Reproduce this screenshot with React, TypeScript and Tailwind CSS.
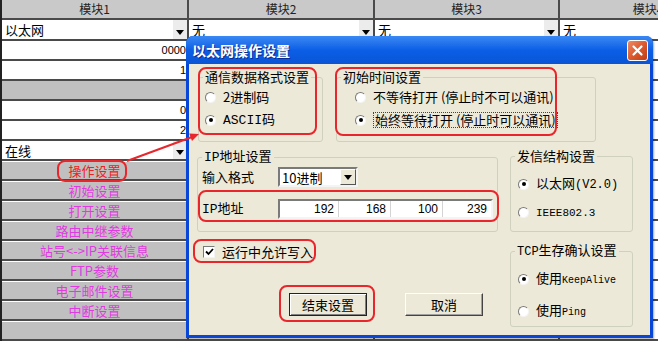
import type { ReactNode } from "react";

const mono = "font-['Liberation_Mono',monospace]";
const redBox = "pointer-events-none absolute rounded-[8px] border-2 border-[#e8262b]";

type Cell = {
  kind: "select" | "num" | "gray" | "btn" | "blank";
  text?: string;
  red?: boolean;
};

const col1: Cell[] = [
  { kind: "select", text: "以太网" },
  { kind: "num", text: "0000" },
  { kind: "num", text: "1" },
  { kind: "gray" },
  { kind: "num", text: "0" },
  { kind: "num", text: "2" },
  { kind: "select", text: "在线" },
  { kind: "btn", text: "操作设置", red: true },
  { kind: "btn", text: "初始设置" },
  { kind: "btn", text: "打开设置" },
  { kind: "btn", text: "路由中继参数" },
  { kind: "btn", text: "站号<->IP关联信息" },
  { kind: "btn", text: "FTP参数" },
  { kind: "btn", text: "电子邮件设置" },
  { kind: "btn", text: "中断设置" },
  { kind: "btn", text: "" },
];

function GridCell({ cell, first }: { cell: Cell; first: boolean }) {
  const h = first ? "h-[21px]" : "h-[20px]";
  if (cell.kind === "btn") {
    return (
      <div
        className={`${h} flex items-center justify-center border-t border-t-white border-b-2 border-b-[#4a4a4a] border-r-2 border-r-[#4a4a4a] bg-[#c0c0c0] text-[13px] leading-none ${
          cell.red ? "text-[#f02020]" : "text-[#e23ae2]"
        }`}
      >
        {cell.text}
      </div>
    );
  }
  if (cell.kind === "select") {
    return (
      <div className={`${h} flex items-center border-b-2 border-r-2 border-[#4a4a4a] bg-white`}>
        <span className="flex-1 pl-[3px] text-[13px] leading-none text-black">{cell.text}</span>
        <span className="flex h-full w-[14px] items-end justify-center bg-[#ececec] pb-[4px]">
          <svg width="8" height="5" viewBox="0 0 8 5">
            <path d="M0 0H8L4 5Z" fill="#000" />
          </svg>
        </span>
      </div>
    );
  }
  if (cell.kind === "num") {
    return (
      <div
        className={`${h} flex items-center justify-end border-b-2 border-r-2 border-[#4a4a4a] bg-white pr-[1px] font-['Liberation_Sans',sans-serif] text-[11px] leading-none text-black`}
      >
        {cell.text}
      </div>
    );
  }
  if (cell.kind === "gray") {
    return <div className={`${h} border-b-2 border-r-2 border-[#4a4a4a] bg-[#c0c0c0]`} />;
  }
  return <div className={`${h} border-b-2 border-r-2 border-[#4a4a4a] bg-white`} />;
}

function Radio({ checked, focus, children }: { checked?: boolean; focus?: boolean; children: ReactNode }) {
  return (
    <div className="flex h-[20px] items-center gap-[7px]">
      <span className="flex h-[11px] w-[11px] items-center justify-center rounded-full border border-t-[#7a7a7a] border-l-[#7a7a7a] border-r-[#f4f4f4] border-b-[#f4f4f4] bg-white">
        {checked && <span className="h-[4px] w-[4px] rounded-full bg-black" />}
      </span>
      <span className={focus ? "border border-dotted border-[#444] px-[1px] leading-[14px]" : ""}>
        {children}
      </span>
    </div>
  );
}

function Group({ title, className, children }: { title: ReactNode; className: string; children: ReactNode }) {
  return (
    <fieldset className={`rounded-[3px] border border-[#d0d0bf] px-[4px] ${className}`}>
      <legend className="px-[2px]">{title}</legend>
      {children}
    </fieldset>
  );
}

function Dialog() {
  return (
    <div className="absolute left-[186px] top-[36px] flex h-[302px] w-[467px] flex-col overflow-hidden rounded-t-[7px] bg-[#0846d8] shadow-[1px_1px_2px_rgba(0,0,0,0.35)]">
      <div className="flex h-[28px] shrink-0 items-center justify-between bg-linear-to-b from-[#3a88f4] via-[#0b5fe6] to-[#0a54d6] pl-[6px] pr-[5px]">
        <span className="text-[14px] font-bold leading-none text-white [text-shadow:1px_1px_0_#0c2a8c]">
          以太网操作设置
        </span>
        <div className="flex h-[21px] w-[21px] items-center justify-center rounded-[3px] border border-white bg-linear-to-br from-[#ec8a64] via-[#dc5a2e] to-[#c03c14]">
          <svg width="13" height="13" viewBox="0 0 13 13">
            <path d="M2.5 2.5L10.5 10.5M10.5 2.5L2.5 10.5" stroke="#fff" strokeWidth="2.2" strokeLinecap="round" />
          </svg>
        </div>
      </div>

      <div className="flex-1 px-[3px] pb-[3px]">
        <div className="relative h-full bg-[#ece9d8] pl-[9px] pt-[5px] text-[13px] leading-[16px] text-black">
          <div className="flex gap-[13px]">
            <Group title="通信数据格式设置" className="h-[73px] w-[125px]">
              <div className="mt-[2px] flex flex-col gap-[3px] pl-[2px]">
                <Radio>2进制码</Radio>
                <Radio checked>
                  <span className={`${mono} text-[13px]`}>ASCII</span>码
                </Radio>
              </div>
            </Group>
            <Group title="初始时间设置" className="h-[73px] w-[260px]">
              <div className="mt-[2px] flex flex-col gap-[3px] pl-[14px]">
                <Radio>不等待打开 (停止时不可以通讯)</Radio>
                <Radio checked focus>
                  始终等待打开 (停止时可以通讯)
                </Radio>
              </div>
            </Group>
          </div>

          <div className="mt-[6px] flex">
            <div className="-ml-[1px] w-[301px]">
              <Group
                title={
                  <>
                    <span className={`${mono} text-[13px]`}>IP</span>地址设置
                  </>
                }
                className="h-[84px] w-[301px]"
              >
                <div className="mt-[1px] flex h-[20px] items-center">
                  <span className="w-[76px]">输入格式</span>
                  <div className="flex h-[20px] w-[80px] items-center border-2 border-t-[#7a7a7a] border-l-[#7a7a7a] border-r-[#f4f4f4] border-b-[#f4f4f4] bg-white">
                    <span className="flex-1 pl-[2px] text-[13px] leading-none">10进制</span>
                    <span className="flex h-full w-[16px] items-center justify-center border border-t-white border-l-white border-r-[#555] border-b-[#555] bg-[#ece9d8]">
                      <svg width="8" height="5" viewBox="0 0 8 5">
                        <path d="M0 0H8L4 5Z" fill="#000" />
                      </svg>
                    </span>
                  </div>
                </div>
                <div className="mt-[12px] flex h-[20px] items-center">
                  <span className="w-[76px]">
                    <span className={`${mono} text-[13px]`}>IP</span>地址
                  </span>
                  <div className="grid h-[20px] w-[215px] grid-cols-[58px_52px_52px_1fr] border-2 border-t-[#7a7a7a] border-l-[#7a7a7a] border-r-[#f4f4f4] border-b-[#f4f4f4] bg-white font-['Liberation_Sans',sans-serif] text-[12px]">
                    <span className="flex items-center justify-end pr-[4px]">192</span>
                    <span className="flex items-center justify-end border-l border-[#d4d4d4] pr-[4px]">168</span>
                    <span className="flex items-center justify-end border-l border-[#d4d4d4] pr-[4px]">100</span>
                    <span className="flex items-center justify-end border-l border-[#d4d4d4] pr-[4px]">239</span>
                  </div>
                </div>
              </Group>

              <div className="mt-[10px] flex h-[20px] items-center gap-[7px] pl-[6px]">
                <span className="flex h-[12px] w-[12px] items-center justify-center border border-t-[#7a7a7a] border-l-[#7a7a7a] border-r-[#f4f4f4] border-b-[#f4f4f4] bg-white">
                  <svg width="9" height="8" viewBox="0 0 9 8">
                    <path d="M1 3.5L3.5 6L8 1" stroke="#000" strokeWidth="1.8" fill="none" />
                  </svg>
                </span>
                <span>运行中允许写入</span>
              </div>

              <div className="mt-[31px] flex gap-[38px] pl-[92px]">
                <button className="flex h-[23px] w-[78px] items-center justify-center border border-[#222] bg-[#ece9d8] text-[13px] shadow-[inset_1px_1px_0_#fff,inset_-1px_-1px_0_#808080]">
                  结束设置
                </button>
                <button className="flex h-[23px] w-[78px] items-center justify-center border border-t-white border-l-white border-r-[#444] border-b-[#444] bg-[#ece9d8] text-[13px] shadow-[inset_-1px_-1px_0_#a0a0a0]">
                  取消
                </button>
              </div>
            </div>

            <div className="ml-[12px] w-[123px]">
              <Group title="发信结构设置" className="h-[84px] w-[123px]">
                <div className="mt-[10px] flex flex-col gap-[8px] pl-[3px]">
                  <Radio checked>
                    以太网<span className={`${mono} text-[12px]`}>(V2.0)</span>
                  </Radio>
                  <Radio>
                    <span className={`${mono} text-[11px]`}>IEEE802.3</span>
                  </Radio>
                </div>
              </Group>
              <Group title={<>
                <span className={`${mono} text-[12px]`}>TCP</span>生存确认设置
              </>} className="mt-[10px] h-[85px] w-[123px]">
                <div className="mt-[9px] flex flex-col gap-[12px] pl-[3px]">
                  <Radio checked>
                    使用<span className={`${mono} text-[10px]`}>KeepAlive</span>
                  </Radio>
                  <Radio>
                    使用<span className={`${mono} text-[10px]`}>Ping</span>
                  </Radio>
                </div>
              </Group>
            </div>
          </div>

          <div className={`${redBox} left-[9px] top-[3px] h-[68px] w-[119px]`} />
          <div className={`${redBox} left-[146px] top-[3px] h-[69px] w-[222px]`} />
          <div className={`${redBox} left-[9px] top-[126px] h-[32px] w-[301px]`} />
          <div className={`${redBox} left-[4px] top-[175px] h-[24px] w-[123px]`} />
          <div className={`${redBox} left-[90px] top-[221px] h-[37px] w-[96px]`} />
        </div>
      </div>
    </div>
  );
}

export default function App() {
  const headers = ["模块1", "模块2", "模块3", "模块4"];
  return (
    <div className="relative h-[344px] w-[658px] overflow-hidden bg-white font-['Noto_Sans_CJK_SC',sans-serif]">
      <div className="grid grid-cols-[187px_186px_185px_178px] border-l-2 border-[#222]">
        {headers.map((h) => (
          <div
            key={h}
            className="flex h-[20px] items-center justify-center border-b-2 border-r-2 border-[#4a4a4a] bg-[#c9c9c9] text-[12px] leading-none text-[#222]"
          >
            {h}
          </div>
        ))}
        {col1.map((cell, i) => (
          <div key={i} className="contents">
            <GridCell cell={cell} first={i === 0} />
            <GridCell cell={i === 0 ? { kind: "select", text: "无" } : { kind: "blank" }} first={i === 0} />
            <GridCell cell={i === 0 ? { kind: "select", text: "无" } : { kind: "blank" }} first={i === 0} />
            <GridCell cell={i === 0 ? { kind: "select", text: "无" } : { kind: "blank" }} first={i === 0} />
          </div>
        ))}
      </div>

      <div className={`${redBox} left-[57px] top-[160px] h-[22px] w-[70px] rounded-[6px]`} />

      <Dialog />

      <svg className="pointer-events-none absolute left-0 top-0" width="658" height="344">
        <line x1="127" y1="161" x2="192" y2="137" stroke="#e8262b" strokeWidth="2" />
        <polygon points="199,134 192,141 189.2,133.5" fill="#e8262b" />
      </svg>
    </div>
  );
}
